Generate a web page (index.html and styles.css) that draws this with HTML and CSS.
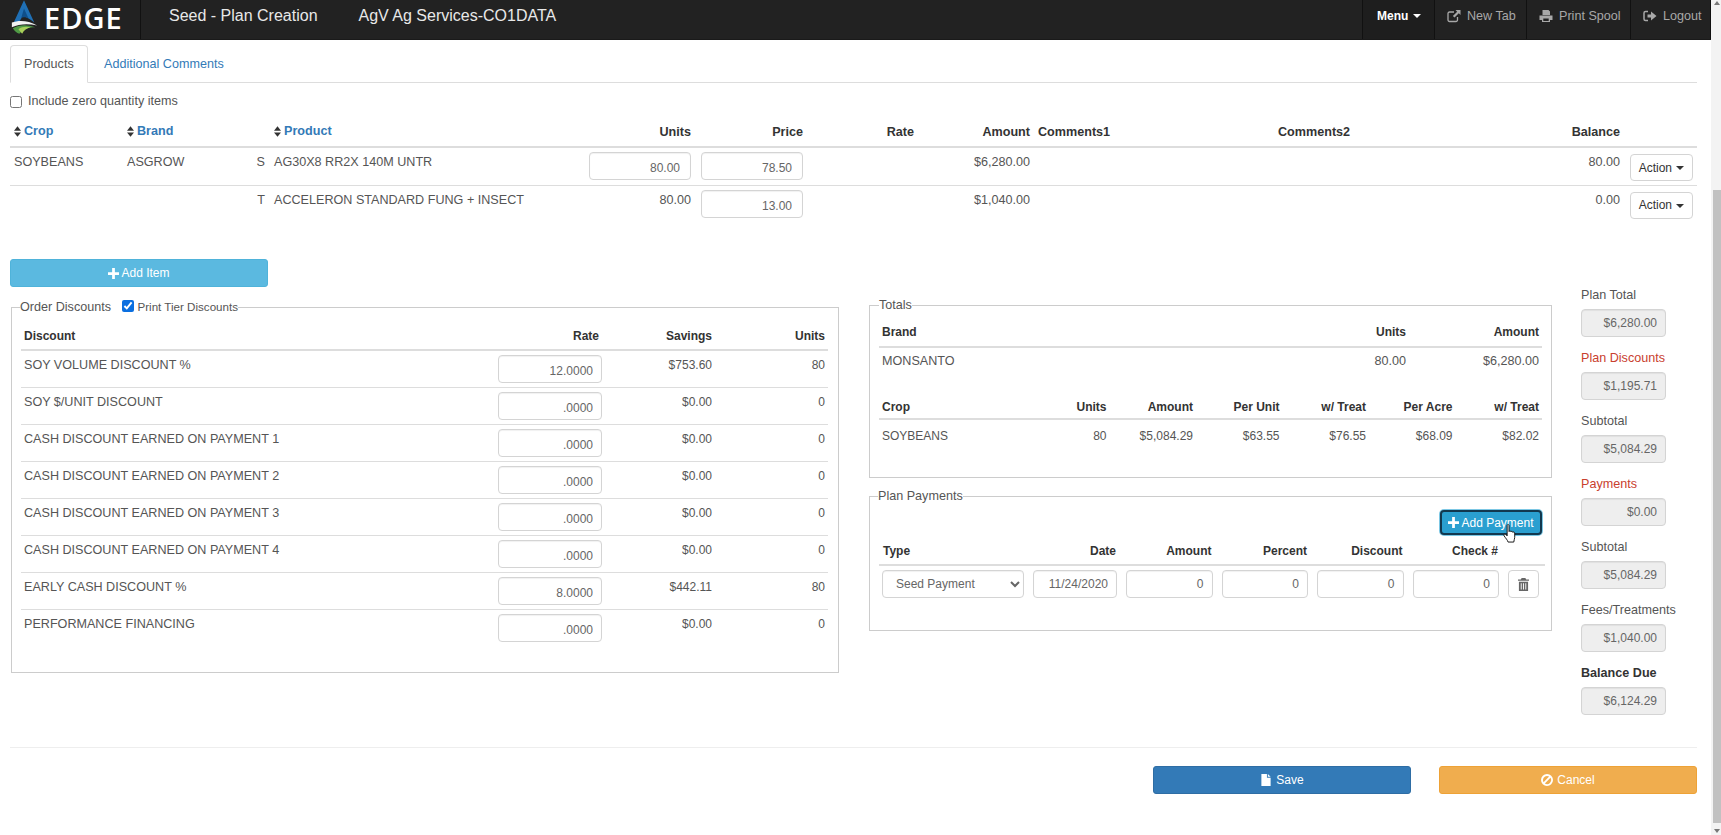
FILE: index.html
```html
<!DOCTYPE html>
<html lang="en">
<head>
<meta charset="utf-8">
<title>Seed - Plan Creation</title>
<link rel="stylesheet" href="styles.css">
</head>
<body>
<div class="app">
  <div class="page">
    <header class="navbar">
      <div class="brand">
        <svg class="logo" viewBox="0 0 30 36" width="28" height="34">
          <path d="M15 0 L26 24 C20 19 16 17 13 18 L10 23 L4 24 Z" fill="#1f6fb4"/>
          <path d="M15 9 L20 20 C17 18 14 18 12 19 Z" fill="#0f4f8a"/>
          <path d="M2 24 C10 21 20 22 29 27 C20 25 10 25 2 29 Z" fill="#f2f2f2"/>
          <path d="M3 30 C10 26 19 26 27 29 C20 29 14 31 10 36 C7 35 5 33 3 30 Z" fill="#4f9a45"/>
          <path d="M9 31 C13 28 18 28 22 29 C18 30 15 32 13 36 Z" fill="#a8cf5a"/>
        </svg>
        <span class="brand-name">EDGE</span>
      </div>
      <div class="nav-title">Seed - Plan Creation</div>
      <div class="nav-title nav-company">AgV Ag Services-CO1DATA</div>
      <nav class="nav-links">
        <a class="nav-link nav-menu">Menu <i class="caret"></i></a>
        <a class="nav-link nav-newtab"><svg class="ic" viewBox="0 0 14 14"><path d="M10.5 8v3a1.5 1.5 0 0 1-1.5 1.5H2.5A1.5 1.5 0 0 1 1 11V4.500A1.500 1.500 0 0 1 2.500 3H7" fill="none" stroke="currentColor" stroke-width="1.300"/><path d="M8.500 1H13.500V6L11.800 4.300 7.500 8.600 5.900 7 10.200 2.700Z" fill="currentColor"/></svg>New Tab</a>
        <a class="nav-link nav-spool"><svg class="ic" viewBox="0 0 14 14"><path d="M3.500 1H9.500L11 2.500V6H3.500ZM0.500 6.500H13.500V11H11V13H3V11H0.500ZM4.300 9.500V12H9.700V9.500Z" fill="currentColor" fill-rule="evenodd"/></svg>Print Spool</a>
        <a class="nav-link nav-logout"><svg class="ic" viewBox="0 0 14 14"><path d="M5 2.500H2.500Q1 2.500 1 4V10Q1 11.500 2.500 11.500H5" fill="none" stroke="currentColor" stroke-width="1.500"/><path d="M4.500 5.500H8V2.500L13.500 7 8 11.500V8.500H4.500Z" fill="currentColor"/></svg>Logout</a>
      </nav>
    </header>

    <main class="content">
      <ul class="tabs">
        <li class="tab tab-active">Products</li>
        <li class="tab">Additional Comments</li>
      </ul>
      <label class="zero-check"><input type="checkbox">Include zero quantity items</label>

      <table class="items">
        <thead>
          <tr>
            <th class="c-crop"><span class="sort"><svg viewBox="0 0 8 12"><path d="M4 0 8 5H0ZM4 12 0 7H8Z"/></svg>Crop</span></th>
            <th class="c-brand"><span class="sort"><svg viewBox="0 0 8 12"><path d="M4 0 8 5H0ZM4 12 0 7H8Z"/></svg>Brand</span></th>
            <th class="c-st"></th>
            <th class="c-product"><span class="sort"><svg viewBox="0 0 8 12"><path d="M4 0 8 5H0ZM4 12 0 7H8Z"/></svg>Product</span></th>
            <th class="c-units r">Units</th>
            <th class="c-price r">Price</th>
            <th class="c-rate r">Rate</th>
            <th class="c-amount r">Amount</th>
            <th class="c-com1">Comments1</th>
            <th class="c-com2">Comments2</th>
            <th class="c-bal r">Balance</th>
            <th class="c-act"></th>
          </tr>
        </thead>
        <tbody>
          <tr>
            <td>SOYBEANS</td><td>ASGROW</td><td class="st">S</td><td>AG30X8 RR2X 140M UNTR</td>
            <td class="r"><input class="field" value="80.00"></td>
            <td class="r"><input class="field" value="78.50"></td>
            <td></td><td class="r">$6,280.00</td><td></td><td></td><td class="r">80.00</td>
            <td class="r"><button class="btn-action">Action <i class="caret"></i></button></td>
          </tr>
          <tr>
            <td></td><td></td><td class="st">T</td><td>ACCELERON STANDARD FUNG + INSECT</td>
            <td class="r">80.00</td>
            <td class="r"><input class="field" value="13.00"></td>
            <td></td><td class="r">$1,040.00</td><td></td><td></td><td class="r">0.00</td>
            <td class="r"><button class="btn-action">Action <i class="caret"></i></button></td>
          </tr>
        </tbody>
      </table>

      <button class="btn btn-info btn-add"><svg class="plus" viewBox="0 0 12 12"><path d="M4.500 0H7.500V4.500H12V7.500H7.500V12H4.500V7.500H0V4.500H4.500Z"/></svg>Add Item</button>

      <div class="columns">
        <fieldset class="box box-discounts">
          <legend>Order Discounts <label class="tier"><input type="checkbox" checked>Print Tier Discounts</label></legend>
          <table class="grid discounts">
            <thead><tr><th>Discount</th><th class="r">Rate</th><th class="r">Savings</th><th class="r">Units</th></tr></thead>
            <tbody>
              <tr><td>SOY VOLUME DISCOUNT %</td><td class="r"><input class="field" value="12.0000"></td><td class="r">$753.60</td><td class="r">80</td></tr>
              <tr><td>SOY $/UNIT DISCOUNT</td><td class="r"><input class="field" value=".0000"></td><td class="r">$0.00</td><td class="r">0</td></tr>
              <tr><td>CASH DISCOUNT EARNED ON PAYMENT 1</td><td class="r"><input class="field" value=".0000"></td><td class="r">$0.00</td><td class="r">0</td></tr>
              <tr><td>CASH DISCOUNT EARNED ON PAYMENT 2</td><td class="r"><input class="field" value=".0000"></td><td class="r">$0.00</td><td class="r">0</td></tr>
              <tr><td>CASH DISCOUNT EARNED ON PAYMENT 3</td><td class="r"><input class="field" value=".0000"></td><td class="r">$0.00</td><td class="r">0</td></tr>
              <tr><td>CASH DISCOUNT EARNED ON PAYMENT 4</td><td class="r"><input class="field" value=".0000"></td><td class="r">$0.00</td><td class="r">0</td></tr>
              <tr><td>EARLY CASH DISCOUNT %</td><td class="r"><input class="field" value="8.0000"></td><td class="r">$442.11</td><td class="r">80</td></tr>
              <tr><td>PERFORMANCE FINANCING</td><td class="r"><input class="field" value=".0000"></td><td class="r">$0.00</td><td class="r">0</td></tr>
            </tbody>
          </table>
        </fieldset>

        <div class="middle">
          <fieldset class="box box-totals">
            <legend>Totals</legend>
            <table class="grid brand-totals">
              <thead><tr><th>Brand</th><th class="r">Units</th><th class="r">Amount</th></tr></thead>
              <tbody><tr><td>MONSANTO</td><td class="r">80.00</td><td class="r">$6,280.00</td></tr></tbody>
            </table>
            <table class="grid crop-totals">
              <thead><tr><th>Crop</th><th class="r">Units</th><th class="r">Amount</th><th class="r">Per Unit</th><th class="r">w/ Treat</th><th class="r">Per Acre</th><th class="r">w/ Treat</th></tr></thead>
              <tbody><tr><td>SOYBEANS</td><td class="r">80</td><td class="r">$5,084.29</td><td class="r">$63.55</td><td class="r">$76.55</td><td class="r">$68.09</td><td class="r">$82.02</td></tr></tbody>
            </table>
          </fieldset>

          <fieldset class="box box-payments">
            <legend>Plan Payments</legend>
            <div class="pay-actions">
              <button class="btn btn-focus"><svg class="plus" viewBox="0 0 12 12"><path d="M4.500 0H7.500V4.500H12V7.500H7.500V12H4.500V7.500H0V4.500H4.500Z"/></svg>Add Payment</button>
              <svg class="cursor" viewBox="0 0 15 20" width="15" height="19"><path d="M5 1.500C5 .3 7 .3 7 1.500V8C7 7 9 7 9 8.300 9 7.500 11 7.500 11 8.800 11 8 13 8.300 13 9.500V14C13 16 12 17 12 19H6C5.500 17 3.500 15 1.800 12.500 1 11 2.500 10 3.500 11L5 12.500Z" fill="#fff" stroke="#111" stroke-width="1"/></svg>
            </div>
            <div class="pay-head">
              <span class="ph-type">Type</span><span class="ph-date r">Date</span><span class="ph-num r">Amount</span><span class="ph-num r">Percent</span><span class="ph-num r">Discount</span><span class="ph-num r">Check #</span>
            </div>
            <div class="pay-row">
              <select class="field pay-select"><option>Seed Payment</option></select>
              <input class="field pay-date" value="11/24/2020">
              <input class="field pay-num" value="0">
              <input class="field pay-num" value="0">
              <input class="field pay-num" value="0">
              <input class="field pay-num" value="0">
              <button class="btn-trash"><svg viewBox="0 0 12 14" width="11" height="13"><path d="M4 0H8L9 1.500H12V3H0V1.500H3ZM1 4H11V14H1ZM3 5.500V12.500H4V5.500ZM5.500 5.500V12.500H6.500V5.500ZM8 5.500V12.500H9V5.500Z" fill="#666" fill-rule="evenodd"/></svg></button>
            </div>
          </fieldset>
        </div>

        <aside class="summary">
          <div class="sum-item"><label>Plan Total</label><input class="field" disabled value="$6,280.00"></div>
          <div class="sum-item red"><label>Plan Discounts</label><input class="field" disabled value="$1,195.71"></div>
          <div class="sum-item"><label>Subtotal</label><input class="field" disabled value="$5,084.29"></div>
          <div class="sum-item red"><label>Payments</label><input class="field" disabled value="$0.00"></div>
          <div class="sum-item"><label>Subtotal</label><input class="field" disabled value="$5,084.29"></div>
          <div class="sum-item"><label>Fees/Treatments</label><input class="field" disabled value="$1,040.00"></div>
          <div class="sum-item strong"><label>Balance Due</label><input class="field" disabled value="$6,124.29"></div>
        </aside>
      </div>

      <hr class="rule">
      <div class="footer-actions">
        <button class="btn btn-save"><svg class="ic-sm" viewBox="0 0 10 13"><path d="M0 0H6V4H10V13H0ZM7 0 10 3H7Z"/></svg>Save</button>
        <button class="btn btn-cancel"><svg class="ic-sm" viewBox="0 0 14 14"><path d="M7 0a7 7 0 1 0 0 14A7 7 0 0 0 7 0ZM2.300 7A4.700 4.700 0 0 1 9.500 3L3 9.500A4.700 4.700 0 0 1 2.300 7ZM4.500 11 11 4.500A4.700 4.700 0 0 1 4.500 11Z" fill-rule="evenodd"/></svg>Cancel</button>
      </div>
    </main>
  </div>
  <div class="scrollbar"><span class="sb-up"></span><span class="sb-thumb"></span><span class="sb-down"></span></div>
</div>
</body>
</html>
```

FILE: styles.css
```css
* { box-sizing: border-box; }
html, body { margin: 0; height: 100%; overflow: hidden; background: #fff; }
body { font: 12.6px/17px "Liberation Sans", Arial, sans-serif; color: #555; }
.app { display: flex; width: 1721px; height: 835px; }
.page { width: 1711px; flex: none; }
.scrollbar { width: 10px; background: #f3f3f3; display: flex; flex-direction: column; align-items: flex-end; }
.sb-up, .sb-down { height: 12px; width: 8px; position: relative; flex: none; }
.sb-up::after, .sb-down::after { content: ""; position: absolute; left: 1px; border-left: 3px solid transparent; border-right: 3px solid transparent; }
.sb-up::after { top: 1px; border-bottom: 4px solid #777; }
.sb-down::after { top: 6px; border-top: 4px solid #777; }
.sb-thumb { width: 8px; height: 633px; margin-top: 178px; background: #c1c1c1; flex: none; }
.sb-down { margin-top: auto; }

.navbar { height: 40px; background: #222; display: flex; align-items: stretch; color: #e6e6e6; border-bottom: 1px solid #1a1a1a; }
.brand { width: 141px; flex: none; display: flex; align-items: flex-start; padding-left: 10px; border-right: 1px solid #111; }
.logo { flex: none; }
.brand-name { font: 600 29px/36px "Open Sans", sans-serif; color: #fff; margin-left: 6px; letter-spacing: 1px; }
.nav-title { font-size: 16px; line-height: 31px; margin-left: 28px; color: #e8e8e8; white-space: nowrap; }
.nav-company { margin-left: 41px; }
.nav-links { margin-left: auto; display: flex; }
.nav-link { display: flex; align-items: center; padding: 0 0 7px 12px; border-left: 1px solid #111; color: #a8a8a8; white-space: nowrap; }
.nav-logout { width: 81px; border-right: 1px solid #111; }
.nav-menu { width: 72px; color: #fff; font-weight: 700; font-size: 12px; padding-left: 14px; gap: 4px; background: #1e1e1e; }
.nav-newtab { width: 92px; }
.nav-spool { width: 104px; }
.caret { display: inline-block; width: 0; height: 0; border-top: 4px solid currentColor; border-left: 4px solid transparent; border-right: 4px solid transparent; vertical-align: middle; margin-left: 1px; }
.ic { width: 14px; height: 14px; margin-right: 6px; flex: none; }

.content { padding: 5px 14px 0 10px; }
.tabs { list-style: none; margin: 0; padding: 0; display: flex; border-bottom: 1px solid #ddd; height: 38px; }
.tab { padding: 11px 16px 0; color: #337ab7; height: 38px; }
.tab-active { color: #555; border: 1px solid #ddd; border-bottom-color: #fff; border-radius: 4px 4px 0 0; padding: 10px 0 0 13px; width: 78px; background: #fff; }
.zero-check { display: flex; align-items: center; height: 17px; margin-top: 10px; }
.zero-check input { width: 12px; height: 12px; margin: 0 6px 0 0; }

table { border-collapse: collapse; width: 100%; table-layout: fixed; }
th { font-weight: 700; color: #333; text-align: left; white-space: nowrap; }
.r { text-align: right; }
.items { margin-top: 12px; }
.items th { height: 25px; padding: 0 4px 3px; border-bottom: 2px solid #ddd; }
.items td { height: 38px; padding: 6px 4px 0; vertical-align: top; border-bottom: 1px solid #ddd; white-space: nowrap; }
.items tbody tr:last-child td { border-bottom: 0; }
.c-crop { width: 113px; } .c-brand { width: 116px; } .c-st { width: 31px; } .c-product { width: 314px; }
.c-units { width: 111px; } .c-price { width: 112px; } .c-rate { width: 111px; } .c-amount { width: 116px; }
.c-com1 { width: 240px; } .c-com2 { width: 210px; } .c-bal { width: 140px; } .c-act { width: 73px; }
.items .st { text-align: right; padding-right: 5px; }
.sort { color: #337ab7; display: inline-flex; align-items: center; gap: 3px; }
.sort svg { width: 7px; height: 11px; fill: #333; }
.field { height: 28px; border: 1px solid #d4d4d4; border-radius: 4px; background: #fff; color: #666; font: 12px "Liberation Sans", Arial, sans-serif; text-align: right; padding: 6px 8px 2px; box-shadow: inset 0 1px 1px rgba(0,0,0,.06); }
.items .field { width: 102px; margin-top: -2px; padding-right: 10px; }
.btn-action { height: 27px; width: 63px; background: #fff; border: 1px solid #d4d4d4; border-radius: 4px; color: #333; font: 12px "Liberation Sans", Arial, sans-serif; padding: 0; margin-top: 0; }

.btn { border: 1px solid transparent; border-radius: 3px; color: #fff; font: 12px "Liberation Sans", Arial, sans-serif; display: flex; align-items: center; justify-content: center; padding: 0; }
.plus { width: 11px; height: 11px; fill: #fff; margin-right: 2px; }
.btn-info { background: #5bb9e0; border-color: #4fb3da; }
.btn-add { width: 258px; height: 28px; margin-top: 36px; }

.columns { display: flex; align-items: flex-start; margin-top: 14px; }
.box { border: 1px solid #ccc; margin: 0; padding: 0 8px; min-width: 0; }
.box legend { padding: 0; color: #555; line-height: 17px; }
.box-discounts { width: 828px; height: 375px; margin-left: 1px; padding: 0 10px 0 9px; margin-top: -3px; }
.box-discounts legend { margin-left: -1px; }
.tier { margin-left: 8px; font-size: 11.6px; }
.tier input { width: 12px; height: 12px; margin: 0 3px 0 0; vertical-align: -1px; accent-color: #0b6fe0; }
.grid th { padding: 0 3px; height: 30px; font-size: 12px; vertical-align: middle; border-bottom: 2px solid #ddd; }
.grid td { padding: 5px 3px 0; vertical-align: top; border-bottom: 1px solid #ddd; }
.discounts { margin-top: 7px; }
.discounts th { height: 27px; }
.discounts td { height: 37px; padding-top: 6px; }
.discounts td.r { font-size: 12px; }
.discounts tbody tr:last-child td { border-bottom: 0; }
.discounts .field { width: 104px; display: block; margin-left: auto; }
.discounts td:nth-child(2) { padding-top: 4px; }
.discounts th:nth-child(2) { width: 107px; }
.discounts th:nth-child(3), .discounts th:nth-child(4) { width: 113px; }

.middle { width: 683px; margin-left: 30px; flex: none; display: flex; flex-direction: column; gap: 10px; }
.box-totals { height: 181px; margin-top: -4px; padding: 0 9px; }
.brand-totals { margin-top: 4px; }
.brand-totals th { height: 29px; }
.brand-totals td { height: 30px; border-bottom: 0; }
.brand-totals th:nth-child(2) { width: 150px; } .brand-totals th:nth-child(3) { width: 133px; }
.crop-totals { margin-top: 20px; }
.crop-totals th { height: 22px; }
.crop-totals td { border-bottom: 0; padding-top: 8px; font-size: 12px; }
.crop-totals th:nth-child(n+2) { width: 86.5px; }
.box-payments { height: 143px; padding: 0 12px; }
.box-payments legend { margin-left: -4px; }
.pay-actions { display: flex; justify-content: flex-end; height: 26px; margin-top: 5px; position: relative; }
.btn-focus { width: 102px; height: 25px; background: #2a9fd0; border: 2px solid #12384f; border-radius: 4px; box-shadow: 0 0 0 1px #7cc7e4; margin-right: -3px; }
.cursor { position: absolute; right: 22px; top: 14px; }
.pay-head, .pay-row { display: flex; }
.pay-head { height: 30px; padding: 2px 6px 0 3px; align-items: center; font-size: 12px; font-weight: 700; color: #333; border-bottom: 2px solid #ddd; margin-left: -3px; margin-right: -6px; }
.ph-type { width: 142px; flex: none; margin-left: 1px; }
.ph-date { width: 91px; flex: none; }
.ph-num { width: 95.5px; flex: none; }
.pay-row { margin-top: 4px; gap: 9px; align-items: flex-start; }
.pay-select { width: 142px; height: 28px; text-align: left; padding: 0 6px 0 9px; }
.pay-date { width: 84px; padding: 0 8px; }
.pay-num { width: 86.5px; padding: 0 8px; }
.btn-trash { width: 31px; height: 28px; background: #fff; border: 1px solid #d4d4d4; border-radius: 4px; padding: 0; display: flex; align-items: center; justify-content: center; }

.summary { margin-left: 29px; width: 110px; flex: none; margin-top: -14px; }
.sum-item { height: 63px; }
.sum-item label { display: block; height: 22px; white-space: nowrap; }
.sum-item .field { width: 85px; background: #eee; padding: 0 8px; display: block; }
.red label { color: #c9402e; }
.strong label { color: #333; font-weight: 700; }

.rule { margin: 19px 0 0; border: 0; border-top: 1px solid #eee; }
.footer-actions { display: flex; justify-content: flex-end; gap: 28px; margin-top: 18px; }
.btn-save, .btn-cancel { width: 258px; height: 28px; }
.btn-save { background: #337ab7; border-color: #2e6da4; }
.btn-cancel { background: #f0ad4e; border-color: #eea236; }
.ic-sm { height: 12px; width: 12px; fill: #fff; margin-right: 4px; }
```
